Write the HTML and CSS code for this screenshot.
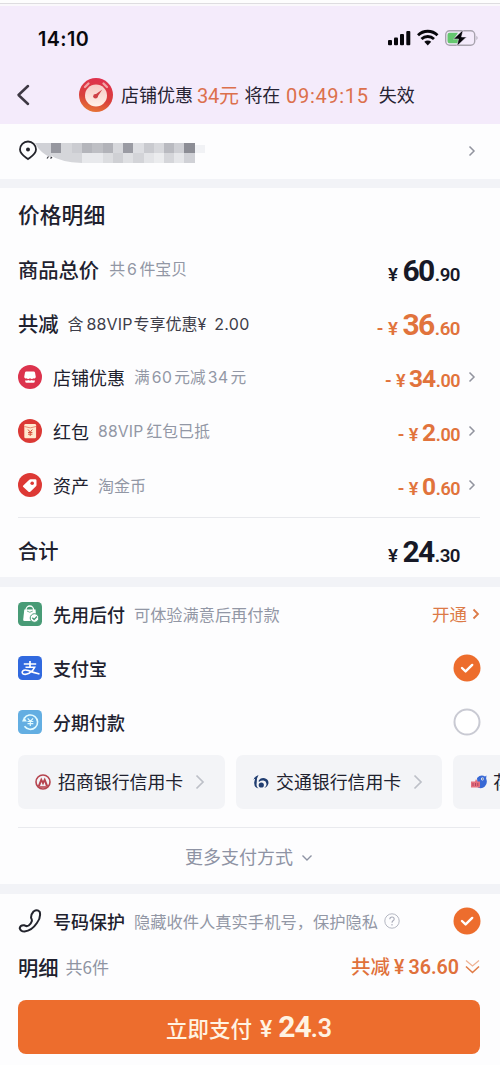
FILE: index.html
```html
<!DOCTYPE html>
<html lang="zh-CN">
<head>
<meta charset="utf-8">
<title>确认支付</title>
<link rel="stylesheet" href="styles.css">
</head>
<body>
<main class="screen">
  <header class="top">
    <div class="status">
      <span class="clock">14:10</span>
      <svg class="status-icons" width="92" height="18" viewBox="0 0 92 18">
        <g fill="#08070c"><rect x="1" y="11" width="4" height="5.3" rx="1"/><rect x="7" y="8.6" width="4" height="7.7" rx="1"/><rect x="13" y="5" width="4" height="11.3" rx="1"/><rect x="19.300" y="2" width="4" height="14.300" rx="1"/></g>
        <g fill="none" stroke="#08070c" stroke-width="2.800"><path d="M31 6.200a14 14 0 0 1 19.500 0"/><path d="M34.500 10a9 9 0 0 1 12.500 0"/></g>
        <path d="M37.300 12.800a5 5 0 0 1 6.900 0l-3.450 3.600z" fill="#08070c"/>
        <rect x="58.700" y="1.700" width="29" height="14.600" rx="4" fill="none" stroke="#a8a3ae" stroke-width="1.400"/>
        <path d="M62.500 3.800h8.500l-4 6h5l-1.500 4.400h-8q-2 0-2-2v-6.400q0-2 2-2z" fill="#65c76f"/>
        <path d="M76 1 66.500 10h5L70 17l9.500-9h-5z" fill="#08070c" stroke="#f3eafa" stroke-width=".5"/>
        <path d="M89.500 6.800q2 2.200 0 4.400z" fill="#a8a3ae"/>
      </svg>
    </div>
    <div class="notice">
      <svg class="back" width="14" height="22" viewBox="0 0 14 22"><path d="M12 2 2.500 11 12 20" fill="none" stroke="#3d3843" stroke-width="2.500" stroke-linecap="round" stroke-linejoin="round"/></svg>
      <svg class="timer" width="36" height="36" viewBox="0 0 36 36">
        <defs><linearGradient id="ring" x1=".6" y1="0" x2=".35" y2="1"><stop stop-color="#df304e"/><stop offset=".6" stop-color="#d9403b"/><stop offset="1" stop-color="#e77735"/></linearGradient><linearGradient id="dial" x1="0" y1="0" x2="0" y2="1"><stop stop-color="#f6c9c5"/><stop offset="1" stop-color="#fff1e8"/></linearGradient></defs>
        <circle cx="18" cy="18" r="17" fill="url(#ring)"/><path d="M7 10 10.500 6.500M25.500 6.500 29 10" stroke="#f1a4a6" stroke-width="2.300" stroke-linecap="round"/>
        <circle cx="18" cy="18.500" r="11" fill="url(#dial)"/><path d="M16 18.500 24.300 12.500 19 20.500z" fill="#ce4147"/><circle cx="17.500" cy="19.300" r="2.300" fill="#ce4147"/>
      </svg>
      <span class="n1">店铺优惠</span><span class="n2 hot">34元</span><span class="n3">将在</span><span class="n4 hot">09:49:15</span><span class="n5">失效</span>
    </div>
  </header>

  <section class="address">
    <svg width="212" height="24" viewBox="0 0 212 24">
      <path d="M10 1.500a8 8 0 0 0-8 8c0 4.500 4 6.500 8 9.500 4-3 8-5 8-9.500a8 8 0 0 0-8-8z" fill="none" stroke="#23242b" stroke-width="1.800"/><circle cx="10" cy="9.500" r="2" fill="#23242b"/>
      <path d="M17 3h16v14.500Q22 13 17 3z" fill="#d0d1d6"/><path d="M32 13h32v10Q42 22 32 15z" fill="#d5d6da"/>
      <rect x="33" y="3" width="10" height="10" fill="#96979f"/><rect x="43" y="3" width="11" height="10" fill="#d5d6da"/><rect x="54" y="3" width="10" height="10" fill="#cbccd1"/><rect x="64" y="3" width="10" height="10" fill="#b4b5bb"/><rect x="74" y="3" width="11" height="10" fill="#bebfc4"/><rect x="85" y="3" width="10" height="10" fill="#b2b3b9"/><rect x="95" y="3" width="10" height="10" fill="#d7d8dc"/><rect x="105" y="3" width="10" height="10" fill="#9a9ba3"/><rect x="115" y="3" width="11" height="10" fill="#dddee2"/><rect x="126" y="3" width="10" height="10" fill="#c9cacf"/><rect x="136" y="3" width="10" height="10" fill="#d7d8dc"/><rect x="146" y="3" width="10" height="10" fill="#b9bac0"/><rect x="156" y="3" width="10" height="10" fill="#cecfd4"/><rect x="166" y="3" width="11" height="10" fill="#8c8d95"/><rect x="177" y="5" width="10" height="8" fill="#f1f2f5"/>
      <rect x="64" y="13" width="21" height="10" fill="#e8e9ec"/><rect x="85" y="13" width="10" height="10" fill="#dcdde0"/><rect x="95" y="13" width="10" height="10" fill="#cfd0d4"/><rect x="105" y="13" width="10" height="10" fill="#dfe0e3"/><rect x="115" y="13" width="11" height="10" fill="#d3d4d8"/><rect x="126" y="13" width="10" height="10" fill="#e3e4e7"/><rect x="136" y="13" width="10" height="10" fill="#ebecee"/><rect x="146" y="13" width="10" height="10" fill="#d5d6da"/><rect x="156" y="13" width="10" height="10" fill="#e5e6e9"/><rect x="166" y="13" width="11" height="10" fill="#d0d1d6"/>
      <path d="M29 18.500l1.500-2M32.500 18.500l1.500-1.500" stroke="#33343b" stroke-width="1.200"/>
    </svg>
    <svg class="chev" width="8" height="12" viewBox="0 0 8 12"><path d="M1.500 1.500 6 6 1.500 10.500"/></svg>
  </section>

  <section class="prices">
    <h1 class="title">价格明细</h1>
    <div class="row"><b class="big">商品总价</b><small class="s1">共<span class="num">6</span>件宝贝</small><span class="price lg dark"><i>¥</i><strong>60</strong><em>.90</em></span></div>
    <div class="row"><b class="big">共减</b><small class="s2">含<span class="lat">88VIP</span>专享优惠¥<span class="amt">2.00</span></small><span class="price lg"><u>-</u><i>¥</i><strong>36</strong><em>.60</em></span></div>
    <div class="row">
      <svg class="ico" width="24" height="24" viewBox="0 0 24 24"><circle cx="12" cy="12" r="12" fill="#dc334d"/><path d="M8.300 6.500h7.400q1 0 1.300 1l.8 4.500q-.4 2-2.100 1.300-1.800 1.200-3.700 0-1.800 1.200-3.700 0Q6.600 14 6.200 12L7 7.500q.3-1 1.300-1z" fill="#fff"/><path d="M7.200 15.200q1.500.8 3-.2 1.800 1.200 3.600 0 1.500 1 3 .2v1q0 1.500-1.500 1.500H8.700q-1.500 0-1.500-1.500z" fill="#fff"/></svg>
      <b class="name light">店铺优惠</b><small class="s3">满<span class="num">60</span>元减<span class="num">34</span>元</small><span class="price"><u>-</u><i>¥</i><strong>34</strong><em>.00</em></span><svg class="chev" width="8" height="12" viewBox="0 0 8 12"><path d="M1.500 1.500 6 6 1.500 10.500"/></svg>
    </div>
    <div class="row">
      <svg class="ico" width="24" height="24" viewBox="0 0 24 24"><circle cx="12" cy="12" r="12" fill="#db3935"/><rect x="6.300" y="5" width="11.800" height="14.300" rx="1.300" fill="#ffe9cf"/><path d="M6.300 7.500q6 2.700 11.800 0" fill="none" stroke="#e98772" stroke-width="1"/><path d="m10 10.500 2.200 2.600 2.200-2.600M12.200 13v4M10 13.500h4.400M10 15.200h4.400" fill="none" stroke="#d8513e" stroke-width="1"/></svg>
      <b class="name light">红包</b><small class="s4">88VIP<span class="gap">红包已抵</span></small><span class="price"><u>-</u><i>¥</i><strong>2</strong><em>.00</em></span><svg class="chev" width="8" height="12" viewBox="0 0 8 12"><path d="M1.500 1.500 6 6 1.500 10.500"/></svg>
    </div>
    <div class="row">
      <svg class="ico" width="24" height="24" viewBox="0 0 24 24"><circle cx="12" cy="12" r="12" fill="#dd3935"/><path d="m5.300 12.500 6-5.700q.5-.5 1.300-.5h4.600q1.300 0 1.300 1.300v4.300q0 .8-.5 1.300l-5.700 5.500q-1 .8-1.800 0l-5.200-4.700q-.9-.8 0-1.500z" fill="#fff"/><circle cx="14.200" cy="10.300" r="1.800" fill="#dd3935"/></svg>
      <b class="name light">资产</b><small class="s5">淘金币</small><span class="price"><u>-</u><i>¥</i><strong>0</strong><em>.60</em></span><svg class="chev" width="8" height="12" viewBox="0 0 8 12"><path d="M1.500 1.500 6 6 1.500 10.500"/></svg>
    </div>
    <div class="row total"><b class="big">合计</b><span class="price lg dark"><i>¥</i><strong>24</strong><em>.30</em></span></div>
  </section>

  <section class="methods">
    <div class="row">
      <svg class="ico" width="24" height="24" viewBox="0 0 24 24"><rect width="24" height="24" rx="4.500" fill="#489b76"/><path d="M8 8V7.800a3.800 3.800 0 0 1 7.600 0V8" fill="none" stroke="#fff" stroke-width="1.300"/><path d="M6.300 7.500h11.200l.6 6.500-4.200 5H6.500q-1.400 0-1.300-1.300z" fill="#fff"/><path d="M9 9q2.800 2.600 5.800 0" fill="none" stroke="#77b696" stroke-width="1"/><circle cx="16.500" cy="16" r="4.300" fill="#fff" stroke="#489b76"/><path d="m14.300 15.800 1.800 1.700 2.900-3" fill="none" stroke="#489b76" stroke-width="1.300"/></svg>
      <b class="name">先用后付</b><small class="s6">可体验满意后再付款</small><span class="open">开通</span><svg class="chev orange" width="8" height="12" viewBox="0 0 8 12"><path d="M1.500 1.500 6 6 1.500 10.500"/></svg>
    </div>
    <div class="row">
      <svg class="ico" width="24" height="24" viewBox="0 0 24 24"><rect width="24" height="24" rx="4.500" fill="#3169df"/><path d="M5.800 8h12.400M12 5v6" fill="none" stroke="#fff" stroke-width="1.700"/><path d="M7.500 11.200h9.200Q15.200 15 11 17.300q-3.500 1.700-5.700.7-1.900-1.300-.6-3 1.800-1.800 5.600-.5Q15 16.500 21.500 18" fill="none" stroke="#fff" stroke-width="1.600"/></svg>
      <b class="name">支付宝</b><svg class="radio" width="28" height="28" viewBox="0 0 28 28"><circle cx="14" cy="14" r="13.500" fill="#ed6d2d"/><path d="m9 14 3.600 3.400 6.600-6.500" fill="none" stroke="#fff" stroke-width="2.400" stroke-linecap="round" stroke-linejoin="round"/></svg>
    </div>
    <div class="row">
      <svg class="ico" width="24" height="24" viewBox="0 0 24 24"><rect width="24" height="24" rx="4.500" fill="#63aee2"/><path d="M6.200 8.500a7.200 7.200 0 1 1 .3 7.800" fill="none" stroke="#e2fbff" stroke-width="1.600"/><path d="M4 11.500 6 7.200l3 4.300z" fill="#e2fbff"/><path d="m9.700 8.300 2.700 3L15 8.300M12.300 11v5M9.500 11.500h5.800M9.500 13.700h5.800" fill="none" stroke="#e2fbff" stroke-width="1.200"/></svg>
      <b class="name">分期付款</b><svg class="radio" width="28" height="28" viewBox="0 0 28 28"><circle cx="14" cy="14" r="12.500" fill="#fff" stroke="#c9cad3" stroke-width="2"/></svg>
    </div>
    <div class="banks">
      <div class="bank"><svg width="16" height="16" viewBox="0 0 16 16"><circle cx="8" cy="8" r="7" fill="none" stroke="#b6444f" stroke-width="1.600"/><path d="M2.800 12 6.200 3.500 8 7l1.800-3.500L13.200 12h-2.400L9.500 8 8 11.500 6.500 8 5 12z" fill="#b6444f"/><path d="M3 13h10" stroke="#b6444f" stroke-width="1.600"/></svg><span>招商银行信用卡</span><svg class="chev wide" width="10" height="16" viewBox="0 0 10 16"><path d="M1.500 1.500 8 8 1.500 14.500"/></svg></div>
      <div class="bank"><svg width="16" height="16" viewBox="0 0 16 16"><path d="M5.500 1 4 4.500 3.500 11q.3 2.500 2 3.500Q1 13.500 1.200 8.500L2 5 .5 6Q1.500 2.500 5.500 1z" fill="#203d70"/><path d="M5.800 6.300Q8 3.500 11.700 4.300q4 1.200 3.800 5-.7 3.500-4.200 4.600 2.300-1.500 2.200-4-.3-2.900-3-3.300Q8 6.400 5.800 8z" fill="#203d70"/><circle cx="8.300" cy="11" r="2.600" fill="#203d70"/></svg><span>交通银行信用卡</span><svg class="chev wide" width="10" height="16" viewBox="0 0 10 16"><path d="M1.500 1.500 8 8 1.500 14.500"/></svg></div>
      <div class="bank cut"><svg width="18" height="16" viewBox="0 0 18 16"><path d="M7 4q4-4 8-1.500l1.500-1-.4 3q2 4.500-1.300 8-3 3-7 1z" fill="#3768d5"/><circle cx="12.500" cy="5" r="1.400" fill="#fff"/><circle cx="12.800" cy="5" r=".7" fill="#203d70"/><path d="M1 7.500h4L6 5l1.500 2.500H10v6H1z" fill="#e5707e"/><path d="M3 9v3M5.500 9v3M7.800 9v3" stroke="#b34562"/></svg><span>花</span></div>
    </div>
    <div class="more"><span>更多支付方式</span><svg width="12" height="8" viewBox="0 0 12 8"><path d="M1.500 1.500 6 6l4.500-4.500" fill="none" stroke="#8e93a4" stroke-width="1.400"/></svg></div>
  </section>

  <footer class="bottom">
    <div class="row privacy">
      <svg class="ico" width="24" height="26" viewBox="0 0 24 26"><path d="M15.500 3.500q3.800-2.500 6.200.3 1.500 5.700-2.800 11.200-5.200 7.800-12.400 8.500-3.900 0-4.800-3.300.5-3.300 4.300-3 2.500 1.700 4.700.3 2.500-2 3.200-4.500.1-1.700-.8-3-.3-3.500 2.400-6.500z" fill="none" stroke="#23242d" stroke-width="2" stroke-linejoin="round"/></svg>
      <b class="name">号码保护</b><small class="s7">隐藏收件人真实手机号，保护隐私</small>
      <svg class="help" width="16" height="16" viewBox="0 0 16 16"><circle cx="8" cy="8" r="7.200" fill="none" stroke="#b4b7c2" stroke-width="1"/><path d="M5.800 6.200q.1-2.200 2.200-2.200t2.200 2q0 1-1.200 1.800Q8 8.500 8 9.800M8 11v1.400" fill="none" stroke="#a8abb8" stroke-width="1.100"/></svg>
      <svg class="radio" width="28" height="28" viewBox="0 0 28 28"><circle cx="14" cy="14" r="13.500" fill="#ed6d2d"/><path d="m9 14 3.600 3.400 6.600-6.500" fill="none" stroke="#fff" stroke-width="2.400" stroke-linecap="round" stroke-linejoin="round"/></svg>
    </div>
    <div class="summary"><b class="big">明细</b><span class="count">共6件</span><span class="saved">共减<i>¥</i><em>36.60</em></span><svg width="15" height="16" viewBox="0 0 15 16"><path d="m1 1.500 6.500 5.500L14 1.500" fill="none" stroke="#efb394" stroke-width="1.300"/><path d="m1 7.500 6.500 6L14 7.500" fill="none" stroke="#e07b46" stroke-width="1.600"/></svg></div>
    <button class="pay"><span>立即支付</span><i>¥</i><strong>24</strong><em>.3</em></button>
  </footer>
</main>
</body>
</html>
```
FILE: styles.css
```css
* { box-sizing: border-box; }
body { margin: 0; background: #fdfdfe; font-family: Inter, "Noto Sans CJK SC", sans-serif; color: #20212e; }
.screen { width: 500px; height: 1065px; overflow: hidden; display: flex; flex-direction: column; }
i, em, u { font-style: normal; text-decoration: none; }
svg { flex: none; display: block; }
span, b, small { white-space: nowrap; }
.top { height: 124px; border-top: 3px solid #fdfdfd; background: #f4ebfb; box-shadow: inset 0 1px #dedde0, inset 0 3px #faf8fb; padding-top: 25px; }
.status { height: 20px; display: flex; align-items: center; justify-content: space-between; padding: 0 21px 0 38px; }
.clock { font-size: 19.700px; font-weight: 600; line-height: 20px; padding-top: 1px; letter-spacing: .4px; color: #09080c; }
.notice { display: flex; align-items: center; height: 36px; margin-top: 29px; padding-left: 16px; font-size: 18px; line-height: 26px; color: #272333; }
.notice span { padding-top: 2px; }
.timer { margin-left: 48px; }
.n1 { margin-left: 7px; }
.hot { color: #dc704c; font-family: Roboto, "Noto Sans CJK SC", sans-serif; font-size: 20px; }
.n2 { margin-left: 4px; letter-spacing: -.3px; }
.n3 { margin-left: 6px; letter-spacing: -.3px; }
.n4 { margin-left: 6px; letter-spacing: .7px; }
.n5 { margin-left: 10px; }
.address { height: 55px; display: flex; align-items: center; justify-content: space-between; padding: 0 24px 2px 18px; }
.address > svg:first-child { margin-top: 2px; }
.chev path { fill: none; stroke: #92949e; stroke-width: 1.500; }
.chev.orange path { stroke: #dc7a47; stroke-width: 1.800; }
.chev.wide path { stroke: #bdc0c8; stroke-width: 1.700; }
.prices { border-top: 9px solid #f2f3f7; height: 398px; }
.title { margin: 0; padding: 0 0 0 18px; height: 54px; line-height: 54px; font-size: 21.800px; font-weight: 500; }
.row { height: 54px; display: flex; align-items: center; padding: 0 20px 0 18px; }
.big { font-size: 20.300px; font-weight: 500; line-height: 30px; padding-top: 3px; }
.name { margin-left: 11px; font-size: 18px; font-weight: 500; line-height: 26px; padding-top: 3px; }
.name.light { font-weight: 400; }
small { font-size: 16px; line-height: 24px; color: #9297a5; margin-left: 9px; padding-top: 2px; }
.num { margin: 0 2px; letter-spacing: .5px; }
.s1 { margin-left: 10px; font-size: 15.900px; }
.s2 { color: #3d3d49; font-size: 16px; }
.lat { margin: 0 1px 0 3px; letter-spacing: .1px; }
.s3 { font-size: 15.700px; }
.s4 { font-size: 15.700px; letter-spacing: .2px; }
.gap { margin-left: 3px; }
.s6 { font-size: 16.200px; }
.amt { margin-left: 8px; letter-spacing: .3px; }
.price { margin-left: auto; display: flex; align-items: baseline; font-family: Roboto, sans-serif; font-weight: 700; color: #e1733c; line-height: 30px; padding: 5px 20px 0 0; }
.price.dark { color: #171927; }
.price strong { font-size: 24.500px; font-weight: 700; letter-spacing: -1.200px; margin-right: 1px; }
.price em, .price i, .price u { font-size: 18px; font-weight: 600; letter-spacing: -.5px; }
.price i { margin-right: 4px; }
.price u { margin-right: 5px; }
.price.lg { padding-top: 8px; }
.price.lg strong { font-size: 30px; letter-spacing: -1.500px; }
.price.lg em, .price.lg i { font-size: 18.700px; }
.price.lg i { margin-right: 5px; }
.row .price + .chev { margin: -1px 4px 0 -12px; }
.total { height: 60px; margin: 5px 20px 0 18px; padding: 6px 0 0; border-top: 1px solid #e8e9ed; }
.total .big { padding-top: 2px; }
.total .price.lg { padding-top: 7px; }
.methods { border-top: 10px solid #f2f3f7; height: 307px; }
.open { margin-left: auto; color: #dc7a47; font-size: 17.500px; line-height: 26px; padding-top: 2px; }
.open + .chev { margin-left: 5px; }
.radio { margin-left: auto; }
.methods .radio, .privacy .radio { margin-right: -1px; }
.banks { display: flex; gap: 11px; padding-left: 18px; margin-top: 6px; overflow: hidden; }
.bank { flex: none; width: 207px; height: 54px; border-radius: 7px; background: #f3f4f7; display: flex; align-items: center; padding-left: 17px; font-size: 17.900px; line-height: 26px; }
.bank span { margin-left: 7px; padding-top: 2px; }
.bank.cut span { margin-left: 5px; }
.bank .chev { margin-left: 12px; }
.bank + .bank { width: 206px; }
.more { margin: 18px 20px 0 18px; height: 57px; border-top: 1px solid #e9eaee; display: flex; align-items: center; justify-content: center; gap: 8px; padding: 3px 0 0; font-size: 18px; line-height: 26px; color: #8e93a4; }
.more span { padding-top: 1px; }
.bottom { border-top: 10px solid #f2f3f7; flex: 1; }
.s7 { font-size: 16.270px; }
.help { margin-left: 6px; }
.summary { height: 38px; display: flex; align-items: center; padding: 0 20px 0 18px; }
.count { margin-left: 7px; font-size: 17px; line-height: 24px; color: #8f94a2; font-family: "Noto Sans CJK SC", sans-serif; }
.saved { margin-left: auto; margin-right: 6px; font-size: 19.500px; font-weight: 500; color: #e0713b; line-height: 28px; padding-top: 2px; font-family: Roboto, "Noto Sans CJK SC", sans-serif; }
.saved i { margin: 0 4px; }
.saved em { font-size: 19.700px; font-weight: 600; }
.pay { display: flex; align-items: baseline; justify-content: center; width: 462px; height: 54px; margin: 14px 0 0 18px; padding: 0; border: 0; border-radius: 8px; background: #ed6d2d; color: #fff3e2; font-family: Roboto, "Noto Sans CJK SC", sans-serif; font-size: 21.500px; font-weight: 500; line-height: 54px; }
.pay i { margin: 0 6px 0 8px; font-size: 23px; }
.pay strong { font-size: 30px; font-weight: 700; letter-spacing: -1px; }
.pay em { font-size: 25px; font-weight: 600; }
```
